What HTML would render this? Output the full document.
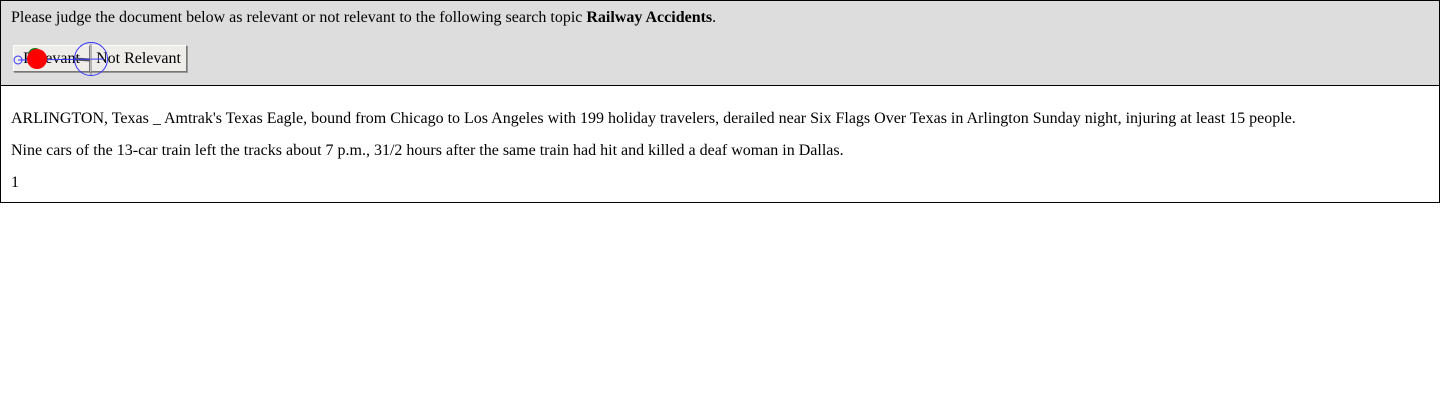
<!DOCTYPE html>
<html><head><style>
body{margin:0;width:1440px;height:400px;background:#fff;font-family:"Liberation Serif",serif;font-size:16px;color:#000;position:relative}
.box{position:absolute;left:0;top:0;width:1438px;height:201px;border:1px solid #000}
.hdr{position:absolute;left:0;top:0;width:1438px;height:84px;background:#ddd;border-bottom:1px solid #000}
.t{position:absolute;left:11px;white-space:nowrap}
.btn{position:absolute;top:45px;height:27px;background:#efedea;border:1px solid #fff;border-right-color:#777;border-bottom-color:#777;box-shadow:1px 1px 0 #999;box-sizing:border-box;font-size:16px;line-height:25px;text-align:center}
</style></head><body>
<div class="box">
<div class="hdr"></div>
</div>
<div class="t" style="top:9px">Please judge the document below as relevant or not relevant to the following search topic <b>Railway Accidents</b>.</div>
<div class="btn" style="left:13px;width:77px">Relevant</div>
<div class="btn" style="left:90px;width:97px">Not Relevant</div>
<svg style="position:absolute;left:0;top:0" width="200" height="90">
<line x1="75" y1="59" x2="90" y2="60" stroke="#555" stroke-width="3"/>
<line x1="18" y1="60" x2="104" y2="59" stroke="#33f" stroke-width="1"/>
<line x1="91" y1="44" x2="91" y2="75" stroke="#777" stroke-width="1"/>
<circle cx="18" cy="60" r="4" fill="none" stroke="#33f"/>
<circle cx="91" cy="59" r="16.5" fill="none" stroke="#33f"/>
<circle cx="35" cy="55" r="7" fill="#1a7d1a"/>
<circle cx="37" cy="59" r="10" fill="#f00"/>
</svg>
<div class="t" style="top:110px">ARLINGTON, Texas _ Amtrak's Texas Eagle, bound from Chicago to Los Angeles with 199 holiday travelers, derailed near Six Flags Over Texas in Arlington Sunday night, injuring at least 15 people.</div>
<div class="t" style="top:142px">Nine cars of the 13-car train left the tracks about 7 p.m., 31/2 hours after the same train had hit and killed a deaf woman in Dallas.</div>
<div class="t" style="top:174px">1</div>
</body></html>
